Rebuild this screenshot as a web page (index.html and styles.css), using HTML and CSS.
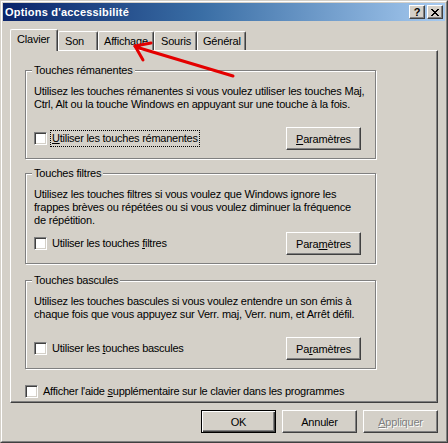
FILE: index.html
```html
<!DOCTYPE html>
<html lang="fr">
<head>
<meta charset="utf-8">
<title>Options d'accessibilité</title>
<link rel="stylesheet" href="styles.css">
</head>
<body>
<div class="window">
  <div class="frame">
    <div class="titlebar">
      <span class="title">Options d'accessibilité</span>
      <div class="title-btns">
        <span class="tbtn help">?</span>
        <span class="tbtn close"><svg width="8" height="7" viewBox="0 0 8 7" shape-rendering="crispEdges"><path d="M0 0h2v1H0zM6 0h2v1H6zM1 1h2v1H1zM5 1h2v1H5zM2 2h4v1H2zM3 3h2v1H3zM2 4h4v1H2zM1 5h2v1H1zM5 5h2v1H5zM0 6h2v1H0zM6 6h2v1H6z" fill="#000"/></svg></span>
      </div>
    </div>
    <div class="content">
      <div class="tabs">
        <div class="tab active t-clavier">Clavier</div>
        <div class="tab t-son">Son</div>
        <div class="tab t-affichage">Affichage</div>
        <div class="tab t-souris">Souris</div>
        <div class="tab t-general">Général</div>
      </div>
      <div class="panel">
        <div class="group g1">
          <div class="legend">Touches rémanentes</div>
          <div class="desc">Utilisez les touches rémanentes si vous voulez utiliser les touches Maj,<br>Ctrl, Alt ou la touche Windows en appuyant sur une touche à la fois.</div>
          <div class="opt-row">
            <label class="check-label"><span class="check"></span><span class="lbl focus"><u>U</u>tiliser les touches rémanentes</span></label>
            <button class="btn"><u>P</u>aramètres</button>
          </div>
        </div>
        <div class="group g2">
          <div class="legend">Touches filtres</div>
          <div class="desc">Utilisez les touches filtres si vous voulez que Windows ignore les<br>frappes brèves ou répétées ou si vous voulez diminuer la fréquence<br>de répétition.</div>
          <div class="opt-row">
            <label class="check-label"><span class="check"></span><span class="lbl">Utiliser les touches <u>f</u>iltres</span></label>
            <button class="btn">Para<u>m</u>ètres</button>
          </div>
        </div>
        <div class="group g3">
          <div class="legend">Touches bascules</div>
          <div class="desc">Utilisez les touches bascules si vous voulez entendre un son émis à<br>chaque fois que vous appuyez sur Verr. maj, Verr. num, et Arrêt défil.</div>
          <div class="opt-row">
            <label class="check-label"><span class="check"></span><span class="lbl">Utiliser les <u>t</u>ouches bascules</span></label>
            <button class="btn">Pa<u>r</u>amètres</button>
          </div>
        </div>
        <label class="check-label bottom-opt"><span class="check"></span><span class="lbl">Afficher l'aide <u>s</u>upplémentaire sur le clavier dans les programmes</span></label>
      </div>
      <div class="actions">
        <button class="btn default">OK</button>
        <button class="btn">Annuler</button>
        <button class="btn disabled"><u>A</u>ppliquer</button>
      </div>
    </div>
  </div>
  <svg class="arrow" width="448" height="443" viewBox="0 0 448 443">
    <g stroke="#e40000" stroke-width="3" stroke-linecap="round" fill="none">
      <line x1="233" y1="76" x2="136" y2="47"/>
      <line x1="135" y1="46" x2="151" y2="43"/>
      <line x1="135" y1="46" x2="143" y2="60"/>
    </g>
  </svg>
</div>
</body>
</html>
```

FILE: styles.css
```css
* { box-sizing: border-box; }
html, body { margin: 0; padding: 0; background: #d4d0c8; }
body {
  font-family: "Liberation Sans", Arial, sans-serif;
  font-size: 11px;
  line-height: 13px;
  color: #000;
}
.window {
  position: relative;
  width: 448px;
  height: 443px;
  border: 1px solid;
  border-color: #d4d0c8 #404040 #404040 #d4d0c8;
  background: #d4d0c8;
}
.frame {
  height: 100%;
  border: 1px solid;
  border-color: #fff #808080 #808080 #fff;
  padding: 1px;
  display: flex;
  flex-direction: column;
}
.titlebar {
  height: 18px;
  flex: none;
  display: flex;
  align-items: center;
  justify-content: space-between;
  padding: 0 2px 0 2px;
  background: linear-gradient(to right, #0a246a 0%, #3a6ea5 45%, #a6caf0 100%);
}
.title {
  color: #fff;
  font-weight: bold;
  letter-spacing: 0.2px;
}
.title-btns { display: flex; gap: 2px; }
.tbtn {
  width: 16px;
  height: 14px;
  background: #d4d0c8;
  border: 1px solid;
  border-color: #fff #404040 #404040 #fff;
  box-shadow: inset -1px -1px #808080;
  display: flex;
  align-items: center;
  justify-content: center;
  font-weight: bold;
  font-size: 11px;
  line-height: 12px;
}
.content {
  flex: 1;
  display: flex;
  flex-direction: column;
  padding: 0 7px 7px 7px;
}
.tabs {
  margin-top: 8px;
  height: 21px;
  display: flex;
  align-items: flex-end;
}
.tab {
  height: 19px;
  padding: 3px 0 0 6px;
  border-top: 1px solid #fff;
  border-left: 1px solid #fff;
  border-right: 1px solid #404040;
  box-shadow: inset -1px 0 #808080;
  border-radius: 2px 2px 0 0;
  background: #d4d0c8;
  white-space: nowrap;
  letter-spacing: -0.2px;
}
.tab.active {
  position: relative;
  z-index: 1;
  height: 22px;
  margin-bottom: -1px;
}
.t-clavier { width: 48px; }
.t-son { width: 40px; }
.t-affichage { width: 56px; padding-left: 5px; }
.t-souris { width: 43px; }
.t-general { width: 49px; padding-left: 5px; }
.panel {
  height: 353px;
  flex: none;
  border: 1px solid;
  border-color: #fff #404040 #404040 #fff;
  box-shadow: inset -1px -1px #808080;
  padding: 19px 61px 0 14px;
  display: flex;
  flex-direction: column;
}
.group {
  border: 1px solid #808080;
  box-shadow: inset 1px 1px #fff, 1px 1px #fff;
  padding: 0 14px 8px 8px;
  display: flex;
  flex-direction: column;
}
.g1 { height: 89px; }
.g2 { height: 91px; margin-top: 14px; }
.g3 { height: 89px; margin-top: 16px; }
.legend {
  align-self: flex-start;
  margin: -7px 0 0 -2px;
  padding: 0 2px;
  background: #d4d0c8;
  letter-spacing: -0.2px;
}
.desc {
  margin-top: 8px;
  white-space: nowrap;
  letter-spacing: -0.2px;
}
.opt-row {
  margin-top: auto;
  display: flex;
  align-items: center;
  justify-content: space-between;
}
.check-label {
  display: flex;
  align-items: center;
  white-space: nowrap;
  letter-spacing: -0.25px;
}
.check {
  width: 13px;
  height: 13px;
  flex: none;
  background: #fff;
  border: 1px solid;
  border-color: #808080 #fff #fff #808080;
  box-shadow: inset 1px 1px #404040, inset -1px -1px #d4d0c8;
  margin-right: 3px;
}
.lbl {
  padding: 1px 1px;
  border: 1px solid transparent;
}
.lbl.focus { border: 1px dotted #000; }
.bottom-opt { margin-top: 14px; }
.btn {
  width: 75px;
  height: 23px;
  padding: 0;
  font-family: inherit;
  font-size: 11px;
  color: #000;
  background: #d4d0c8;
  border: 1px solid;
  border-color: #fff #404040 #404040 #fff;
  box-shadow: inset -1px -1px #808080;
  border-radius: 0;
  letter-spacing: -0.2px;
}
.btn.default {
  border-color: #000;
  box-shadow: inset 1px 1px #fff, inset -1px -1px #404040, inset -2px -2px #808080;
}
.btn.disabled {
  color: #808080;
  text-shadow: 1px 1px #fff;
}
.actions {
  margin-top: 7px;
  display: flex;
  justify-content: flex-end;
  gap: 6px;
}
.arrow {
  position: absolute;
  left: -1px;
  top: -1px;
  pointer-events: none;
}
```
